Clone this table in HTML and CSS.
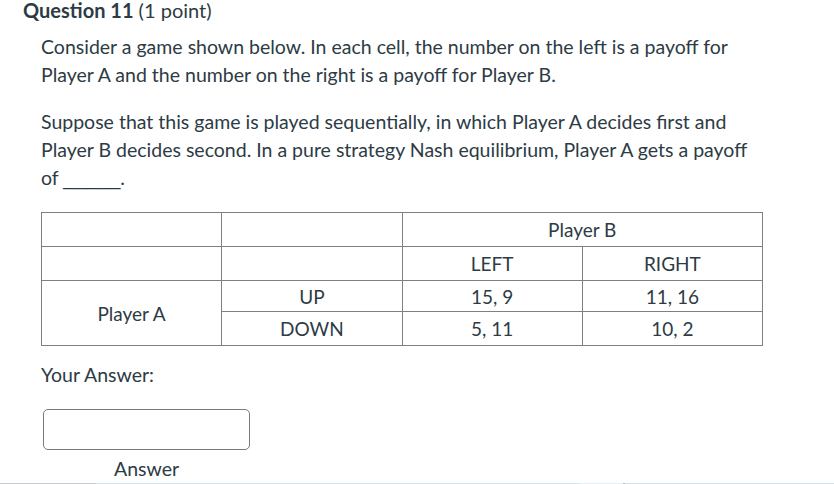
FILE: index.html
```html
<!DOCTYPE html>
<html>
<head>
<meta charset="utf-8">
<link rel="stylesheet" href="styles.css">
</head>
<body>
<div class="question">
  <div class="q-header"><span class="q-name">Question 11</span> <span class="q-points">(1 point)</span></div>
  <div class="q-body">
    <p class="q-text">Consider a game shown below. In each cell, the number on the left is a payoff for Player A and the number on the right is a payoff for Player B.</p>
    <p class="q-text">Suppose that this game is played sequentially, in which Player A decides first and Player B decides second. In a pure strategy Nash equilibrium, Player A gets a payoff of <span class="blank">_____</span>.</p>
    <table class="game">
      <tr class="r1"><td></td><td></td><td colspan="2">Player B</td></tr>
      <tr class="r2"><td></td><td></td><td>LEFT</td><td>RIGHT</td></tr>
      <tr class="r3"><td rowspan="2">Player A</td><td>UP</td><td>15, 9</td><td>11, 16</td></tr>
      <tr class="r4"><td>DOWN</td><td>5, 11</td><td>10, 2</td></tr>
    </table>
    <div class="your-answer">Your Answer:</div>
    <div class="answer-wrap">
      <div class="answer-box"></div>
      <div class="answer-label">Answer</div>
    </div>
  </div>
</div>
<div class="footer-strip">
  <div class="strip-a"></div>
  <div class="strip-b"></div>
  <div class="strip-c"></div>
  <div class="strip-d"></div>
</div>
</body>
</html>
```
FILE: styles.css
```css
html, body {
  margin: 0;
  padding: 0;
  background: #ffffff;
}
body {
  font-family: Lato, "Open Sans", sans-serif;
  color: #2d3b45;
  width: 834px;
  height: 484px;
  overflow: hidden;
  display: flex;
  flex-direction: column;
}
.question {
  flex: 1;
}
.q-header {
  padding-left: 23px;
  font-size: 20px;
  line-height: 20px;
}
.q-name {
  font-weight: 700;
}
.q-body {
  padding-left: 41px;
  width: 721px;
}
.q-text {
  font-size: 19.5px;
  line-height: 28px;
  margin: 13px 0 19px 0;
}
.q-text + .q-text {
  margin-top: 0;
}
.blank {
  font-family: "Liberation Sans", Arial, sans-serif;
  font-size: 20.5px;
  line-height: 20px;
}
.game {
  border-collapse: collapse;
  width: 722px;
  margin-top: 20px;
  font-size: 19px;
}
.game td {
  border: 1px solid #808080;
  text-align: center;
  width: 25%;
  padding: 0;
}
.r1 td, .r2 td { height: 33px; }
.r3 td { height: 30px; }
.r4 td { height: 33px; }
.r3 td[rowspan] { height: auto; }
.your-answer {
  font-size: 19.5px;
  line-height: 28px;
  margin-top: 15px;
}
.answer-wrap {
  width: 207px;
  margin-top: 20px;
  margin-left: 2px;
}
.answer-box {
  height: 39px;
  border: 1px solid #777c80;
  border-radius: 5px;
}
.answer-label {
  text-align: center;
  font-size: 19.5px;
  line-height: 28px;
  margin-top: 5px;
}
.footer-strip {
  height: 3px;
  display: flex;
}
.strip-a {
  width: 96px;
  border-top: 1px solid #c8ccd0;
  background: #f4f6f8;
}
.strip-b {
  width: 484px;
  background: #d7e6ee;
}
.strip-c {
  width: 43px;
  background: #e8eef8;
  border-right: 2px solid #b8c0c8;
}
.strip-d {
  flex: 1;
  background: #d3e1ec;
}
```
